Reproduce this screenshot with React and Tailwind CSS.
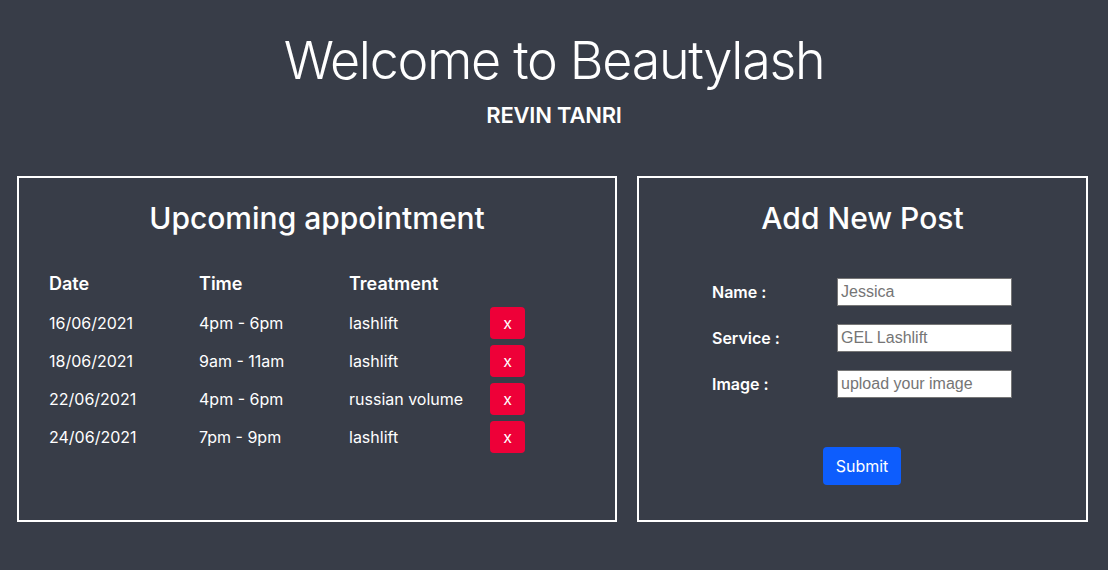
import React from 'react';

const appointments = [
  { date: '16/06/2021', time: '4pm - 6pm', treatment: 'lashlift' },
  { date: '18/06/2021', time: '9am - 11am', treatment: 'lashlift' },
  { date: '22/06/2021', time: '4pm - 6pm', treatment: 'russian volume' },
  { date: '24/06/2021', time: '7pm - 9pm', treatment: 'lashlift' },
];

const fields = [
  { label: 'Name :', placeholder: 'Jessica' },
  { label: 'Service :', placeholder: 'GEL Lashlift' },
  { label: 'Image :', placeholder: 'upload your image' },
];

const App = () => {
  return (
    <div
      className="w-full min-h-screen bg-[#383d48] text-white"
      style={{ fontFamily: 'Inter, "Noto Sans", sans-serif' }}
    >
      <div className="flex flex-col items-center pt-[35px]">
        <h1 className="text-[52px] font-light leading-none tracking-[-0.025em]">Welcome to Beautylash</h1>
        <h2 className="mt-[17px] text-[22px] font-semibold leading-none tracking-[-0.01em]">REVIN TANRI</h2>
      </div>

      <div className="flex flex-row gap-[20px] pl-[17px] pt-[50px]">
        {/* appointments */}
        <div className="w-[600px] h-[346px] border-2 border-white px-[30px] pt-[25px]">
          <h3 className="text-center text-[30px] font-medium leading-none">Upcoming appointment</h3>
          <div className="mt-[42px] grid grid-cols-[150px_150px_141px_35px] items-center text-[18px] font-semibold leading-none">
            <div>Date</div>
            <div>Time</div>
            <div>Treatment</div>
            <div></div>
          </div>
          <div className="mt-[14px] flex flex-col gap-[6px]">
            {appointments.map((a, i) => (
              <div key={i} className="grid grid-cols-[150px_150px_141px_35px] items-center text-[16px]">
                <div>{a.date}</div>
                <div>{a.time}</div>
                <div>{a.treatment}</div>
                <button className="h-[32px] w-[35px] rounded-[4px] bg-[#ee0038] text-white text-[16px]">x</button>
              </div>
            ))}
          </div>
        </div>

        {/* add post */}
        <div className="w-[451px] h-[346px] border-2 border-white pt-[25px]">
          <h3 className="text-center text-[30px] font-medium leading-none">Add New Post</h3>
          <form className="mt-[45px] flex flex-col gap-[18px] pl-[73px]">
            {fields.map((f, i) => (
              <div key={i} className="flex flex-row items-center">
                <label className="w-[125px] text-[16px] font-semibold">{f.label}</label>
                <input
                  type="text"
                  placeholder={f.placeholder}
                  className="w-[175px] h-[28px] bg-white border border-[#767676] px-[3px] text-[16px] text-black placeholder:text-[#757575]"
                  style={{ fontFamily: '"Liberation Sans", Arial, sans-serif' }}
                />
              </div>
            ))}
            <div className="mt-[31px] flex flex-row">
              <button
                type="button"
                className="ml-[111px] w-[78px] h-[38px] rounded-[4px] bg-[#0d5dfd] text-white text-[16px]"
              >
                Submit
              </button>
            </div>
          </form>
        </div>
      </div>
    </div>
  );
};

export default App;
